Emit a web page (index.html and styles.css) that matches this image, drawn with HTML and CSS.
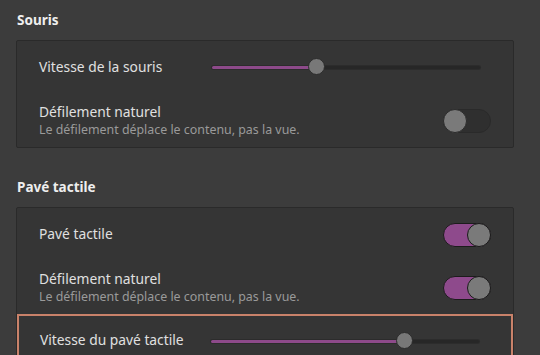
FILE: index.html
```html
<!DOCTYPE html>
<html lang="fr">
<head>
  <meta charset="UTF-8" />
  <meta name="viewport" content="width=device-width, initial-scale=1.0" />
  <title>Souris et pavé tactile</title>
  <link rel="stylesheet" href="styles.css">
</head>
<body>
  <div class="page">
    <h2 class="section-title">Souris</h2>
    <div class="frame">
      <div class="row">
        <span class="label">Vitesse de la souris</span>
        <div class="slider">
          <div class="slider-fill" style="width: 37.5%"></div>
          <div class="slider-thumb" style="left: 37.5%"></div>
        </div>
      </div>
      <div class="row">
        <div class="text">
          <span class="label">Défilement naturel</span>
          <span class="sub">Le défilement déplace le contenu, pas la vue.</span>
        </div>
        <div class="switch"><div class="knob"></div></div>
      </div>
    </div>

    <h2 class="section-title second">Pavé tactile</h2>
    <div class="frame">
      <div class="row">
        <span class="label">Pavé tactile</span>
        <div class="switch on"><div class="knob"></div></div>
      </div>
      <div class="row">
        <div class="text">
          <span class="label">Défilement naturel</span>
          <span class="sub">Le défilement déplace le contenu, pas la vue.</span>
        </div>
        <div class="switch on"><div class="knob"></div></div>
      </div>
      <div class="row focused">
        <span class="label">Vitesse du pavé tactile</span>
        <div class="slider">
          <div class="slider-fill" style="width: 71%"></div>
          <div class="slider-thumb" style="left: 71%"></div>
        </div>
      </div>
    </div>
  </div>
</body>
</html>
```

FILE: styles.css
```css
body {
  margin: 0;
  background-color: #3c3c3c;
  font-family: "Noto Sans", "Open Sans", sans-serif;
  color: #dcdcdc;
  overflow: hidden;
}
.page {
  padding: 10px 26px 0 16px;
}
.section-title {
  margin: 0 0 10px 1px;
  font-size: 13.5px;
  font-weight: bold;
  color: #eeeeee;
  line-height: 20px;
}
.section-title.second {
  margin-top: 29px;
}
.frame {
  background: #353535;
  border: 1px solid #2a2a2a;
  border-radius: 2px;
}
.row {
  display: flex;
  align-items: center;
  justify-content: space-between;
  height: 53px;
  padding: 0 22px;
  box-sizing: border-box;
}
.row.focused {
  height: 54px;
  border: 2px solid #c9826a;
  padding: 0 21px;
}
.label {
  font-size: 13.8px;
  line-height: 18px;
  color: #e0e0e0;
  margin-top: -2px;
}
.text {
  display: flex;
  flex-direction: column;
  gap: 0;
}
.text .label {
  margin-top: 0;
}
.sub {
  font-size: 12.4px;
  line-height: 17px;
  color: #9a9a9a;
}
.slider {
  position: relative;
  width: 268px;
  height: 3px;
  margin-right: 11px;
  background: #272727;
  border-radius: 2px;
  box-shadow: 0 0 0 1px #2c2c2c;
}
.slider-fill {
  height: 3px;
  background: #8d4a8a;
  border-radius: 2px;
}
.slider-thumb {
  position: absolute;
  top: -8px;
  width: 17px;
  height: 17px;
  margin-left: -5px;
  border-radius: 50%;
  background: #787878;
  border: 1px solid #2c2c2c;
  box-sizing: border-box;
}
.switch {
  width: 48px;
  height: 24px;
  border-radius: 12px;
  background: #2f2f2f;
  border: 1px solid #2a2a2a;
  box-sizing: border-box;
  display: flex;
  align-items: center;
}
.switch .knob {
  width: 24px;
  height: 24px;
  margin-left: -1px;
  border-radius: 50%;
  background: #7a7a7a;
  border: 1px solid #2c2c2c;
  box-sizing: border-box;
}
.switch.on {
  background: #8e4a8c;
  border-color: #1c1c1c;
  justify-content: flex-end;
}
.switch.on .knob {
  margin-left: 0;
  margin-right: -1px;
  border-color: #1a1a1a;
}
```
